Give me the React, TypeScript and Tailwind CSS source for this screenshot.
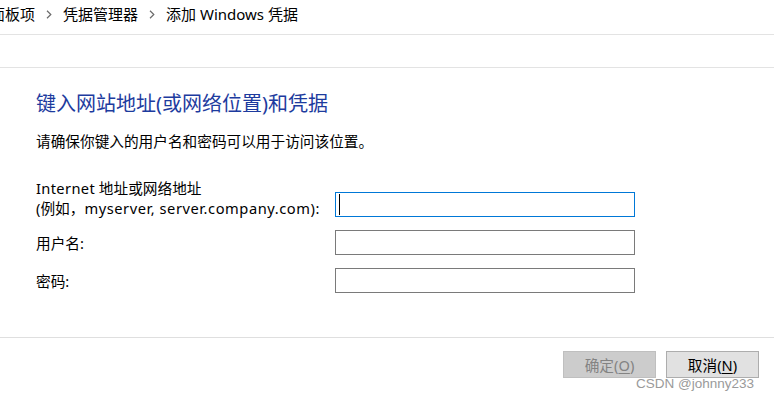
import React from "react";

const FONT = { fontFamily: '"Noto Sans", "Noto Sans CJK SC", sans-serif' };

function Chevron() {
  return (
    <svg width="6" height="9" viewBox="0 0 6 9" className="shrink-0">
      <path d="M1 0.8 L4.8 4.5 L1 8.2" fill="none" stroke="#6b6b6b" strokeWidth="1.2" />
    </svg>
  );
}

export default function App() {
  return (
    <div className="relative w-[774px] h-[401px] bg-white overflow-hidden text-black flex flex-col" style={FONT}>
      {/* breadcrumb */}
      <div className="h-[35px] shrink-0 border-b border-[#e3e3e3] flex items-start pt-[4px] text-[15px] leading-[20px] whitespace-nowrap">
        <span className="-ml-[70px]">所有控制面板项</span>
        <span className="mx-[11px] flex items-center h-[20px]"><Chevron /></span>
        <span>凭据管理器</span>
        <span className="mx-[11px] flex items-center h-[20px]"><Chevron /></span>
        <span>添加 Windows 凭据</span>
      </div>
      <div className="h-[33px] shrink-0 border-b border-[#e3e3e3]" />

      {/* content */}
      <div className="h-[269px] shrink-0 pl-[36px] pt-[22px] flex flex-col">
        <div className="text-[20px] leading-[28px] text-[#1d3b9e]">键入网站地址(或网络位置)和凭据</div>
        <div className="mt-[13px] text-[14.67px] leading-[20px]">请确保你键入的用户名和密码可以用于访问该位置。</div>

        <div className="mt-[27px] flex flex-col">
          <div className="flex h-[40px]">
            <div className="w-[299px] text-[14.67px] leading-[20px] whitespace-nowrap">
              <div>
                <span className="tracking-[0.35px]">Internet</span> 地址或网络地址
              </div>
              <div>
                (例如，<span className="tracking-[0.55px]">myserver, server.company.com):</span>
              </div>
            </div>
            <div className="mt-[14px] w-[300px] h-[25px] border border-[#0078d7] relative">
              <div className="absolute left-[3px] top-[1px] w-px h-[21px] bg-black" />
            </div>
          </div>
          <div className="flex mt-[12px] h-[25px] items-center">
            <div className="w-[299px] text-[14.67px] leading-[20px]">用户名:</div>
            <div className="w-[300px] h-[25px] border border-[#7a7a7a]" />
          </div>
          <div className="flex mt-[13px] h-[25px] items-center">
            <div className="w-[299px] text-[14.67px] leading-[20px]">密码:</div>
            <div className="w-[300px] h-[25px] border border-[#7a7a7a]" />
          </div>
        </div>
      </div>

      {/* footer */}
      <div className="border-t border-[#dfdfdf] pt-[13px] pr-[15px] flex justify-end gap-[10px]">
        <button className="w-[93px] h-[27px] bg-[#cccccc] border border-[#bfbfbf] text-[#838383] text-[14.67px] leading-[20px] flex items-center justify-center">
          确定(<span className="underline underline-offset-2">O</span>)
        </button>
        <button className="w-[93px] h-[27px] bg-[#e1e1e1] border border-[#adadad] text-black text-[14.67px] leading-[20px] flex items-center justify-center">
          取消(<span className="underline underline-offset-2">N</span>)
        </button>
      </div>

      {/* watermark */}
      <div
        className="absolute left-[636px] top-[375px] text-[13.5px] leading-[18px] text-[#9a9a9a] whitespace-nowrap"
        style={{ fontFamily: '"Liberation Sans", Arial, sans-serif' }}
      >
        CSDN @johnny233
      </div>
    </div>
  );
}
